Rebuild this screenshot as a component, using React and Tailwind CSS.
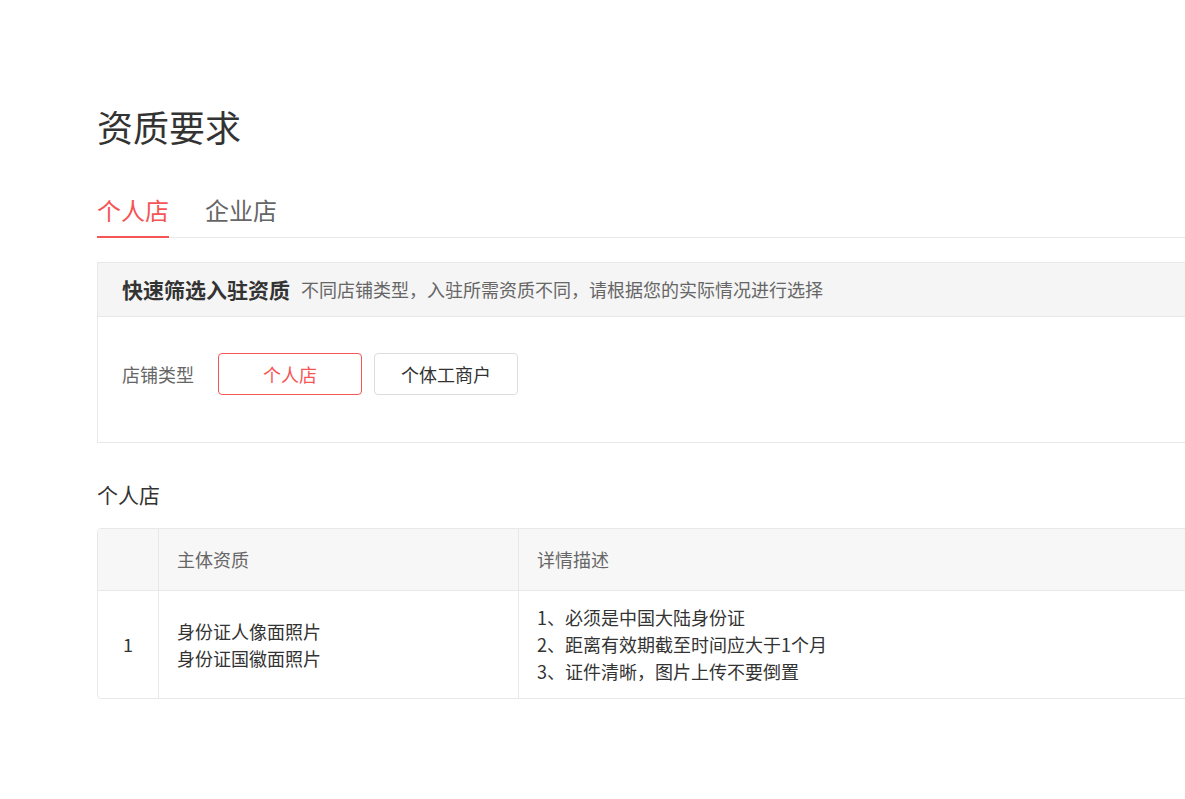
import React, { useState } from "react";

const rows = [
  {
    no: 1,
    items: ["身份证人像面照片", "身份证国徽面照片"],
    desc: ["1、必须是中国大陆身份证", "2、距离有效期截至时间应大于1个月", "3、证件清晰，图片上传不要倒置"],
  },
];

export default function App() {
  const [tab, setTab] = useState(0);
  const [type, setType] = useState(0);
  const tabs = ["个人店", "企业店"];
  const types = ["个人店", "个体工商户"];

  return (
    <div
      className="w-full min-h-screen overflow-hidden bg-white text-[#333]"
      style={{ fontFamily: '"Noto Sans CJK SC", "Noto Sans", sans-serif' }}
    >
      <div className="ml-[97px] w-[1200px] pt-[99px] pb-[100px]">
        <h1 className="text-[36px] leading-[54px] font-normal text-[#333]">资质要求</h1>

        {/* tabs */}
        <div className="mt-[39px] flex gap-[36px] border-b border-[#e8e8e8]">
          {tabs.map((t, i) => (
            <button
              key={t}
              onClick={() => setTab(i)}
              className={
                i === tab
                  ? "-mb-[1px] border-b-2 border-[#f55555] pb-[8px] text-[24px] leading-[36px] text-[#f55555]"
                  : "-mb-[1px] border-b-2 border-transparent pb-[8px] text-[24px] leading-[36px] text-[#666]"
              }
            >
              {t}
            </button>
          ))}
        </div>

        {/* quick filter */}
        <div className="mt-[24px] border border-[#e8e8e8]">
          <div className="flex h-[54px] items-center border-b border-[#e8e8e8] bg-[#f5f5f5] px-[24px]">
            <span className="text-[21px] font-bold text-[#333]">快速筛选入驻资质</span>
            <span className="ml-[11px] text-[18px] text-[#666]">
              不同店铺类型，入驻所需资质不同，请根据您的实际情况进行选择
            </span>
          </div>
          <div className="flex items-center pl-[24px] pt-[36px] pb-[47px]">
            <span className="text-[18px] text-[#666]">店铺类型</span>
            <div className="ml-[24px] flex gap-[12px]">
              {types.map((t, i) => (
                <button
                  key={t}
                  onClick={() => setType(i)}
                  className={
                    i === type
                      ? "h-[42px] w-[144px] rounded-[4px] border border-[#f55555] text-[18px] text-[#f55555]"
                      : "h-[42px] w-[144px] rounded-[4px] border border-[#dddddd] text-[18px] text-[#333]"
                  }
                >
                  {t}
                </button>
              ))}
            </div>
          </div>
        </div>

        <h2 className="mt-[36px] text-[21px] leading-[30px] font-normal text-[#333]">个人店</h2>

        {/* table */}
        <div className="mt-[19px] overflow-hidden rounded-[4px] border border-[#e8e8e8]">
          <div className="grid h-[62px] grid-cols-[61px_360px_1fr] border-b border-[#e8e8e8] bg-[#f7f7f7] text-[18px] text-[#666]">
            <div className="border-r border-[#e8e8e8]" />
            <div className="flex items-center border-r border-[#e8e8e8] pl-[18px]">主体资质</div>
            <div className="flex items-center pl-[18px]">详情描述</div>
          </div>
          {rows.map((r) => (
            <div
              key={r.no}
              className="grid h-[107px] grid-cols-[61px_360px_1fr] text-[18px] leading-[27px] text-[#333]"
            >
              <div className="flex items-center justify-center border-r border-[#e8e8e8]">{r.no}</div>
              <div className="flex flex-col justify-center border-r border-[#e8e8e8] pl-[18px]">
                {r.items.map((x) => (
                  <div key={x}>{x}</div>
                ))}
              </div>
              <div className="flex flex-col justify-center pl-[18px]">
                {r.desc.map((x) => (
                  <div key={x}>{x}</div>
                ))}
              </div>
            </div>
          ))}
        </div>
      </div>
    </div>
  );
}
